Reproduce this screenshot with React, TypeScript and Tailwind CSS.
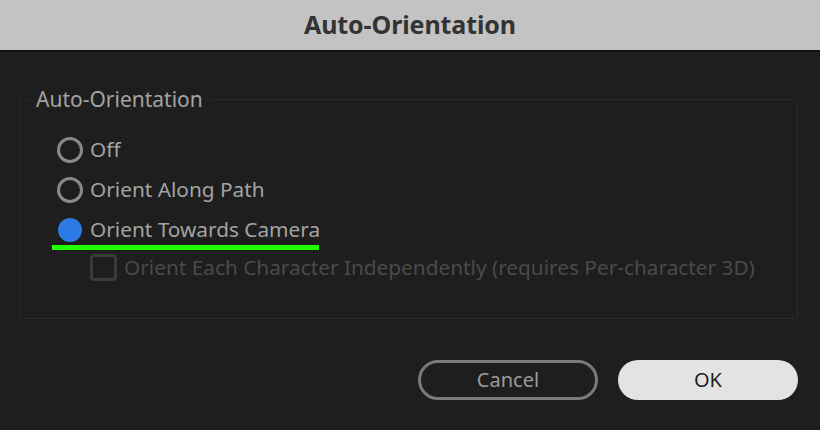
import React from "react";

export default function App() {
  return (
    <div
      className="w-[820px] h-[430px] bg-[#1e1e1e] flex flex-col overflow-hidden"
      style={{ fontFamily: '"Noto Sans", "Open Sans", sans-serif' }}
    >
      <div className="h-[52px] bg-[#c3c3c3] border-b-2 border-[#111] flex items-center justify-center shrink-0">
        <span className="text-[25px] font-bold text-[#333] tracking-[-0.1px]">Auto-Orientation</span>
      </div>
      <div className="flex-1 flex flex-col px-[19px] pt-[47px]">
        <div className="relative h-[220px] w-[779px] border border-[#2a2a2a] rounded-[3px] pl-[37px] pt-[37px]">
          <span className="absolute left-[9px] top-[-16px] bg-[#1e1e1e] px-[7px] text-[21px] leading-[30px] text-[#a3a3a3]">
            Auto-Orientation
          </span>
          <div className="flex flex-col gap-[14px]">
            <div className="flex items-center gap-[7px] h-[26px]">
              <span className="w-[26px] h-[26px] rounded-full border-[3px] border-[#8a8a8a]" />
              <span className="text-[20.8px] text-[#a3a3a3]">Off</span>
            </div>
            <div className="flex items-center gap-[7px] h-[26px]">
              <span className="w-[26px] h-[26px] rounded-full border-[3px] border-[#8a8a8a]" />
              <span className="text-[20.8px] text-[#a3a3a3]">Orient Along Path</span>
            </div>
            <div className="relative flex items-center gap-[7px] h-[26px]">
              <span className="ml-[1px] w-[24px] h-[24px] rounded-full bg-[#2c7be5]" />
              <span className="ml-[1px] text-[20.8px] text-[#a3a3a3]">Orient Towards Camera</span>
              <span className="absolute left-[-5px] top-[28px] w-[267px] h-[5px] bg-[#22ff00]" />
            </div>
          </div>
          <div className="flex items-center gap-[7px] ml-[33px] mt-[11px] h-[27px]">
            <span className="w-[27px] h-[27px] rounded-[4px] border-[3px] border-[#3a3a3a]" />
            <span className="text-[20.8px] text-[#4a4a4a]">
              Orient Each Character Independently (requires Per-character 3D)
            </span>
          </div>
        </div>
        <div className="flex justify-end gap-[20px] mt-[41px] mr-[3px]">
          <button className="w-[180px] h-[40px] rounded-full border-[3px] border-[#7a7a7a] text-[20px] text-[#9a9a9a] flex items-center justify-center">
            Cancel
          </button>
          <button className="w-[180px] h-[40px] rounded-full bg-[#e3e3e3] text-[20px] text-[#1e1e1e] flex items-center justify-center">
            OK
          </button>
        </div>
      </div>
    </div>
  );
}
